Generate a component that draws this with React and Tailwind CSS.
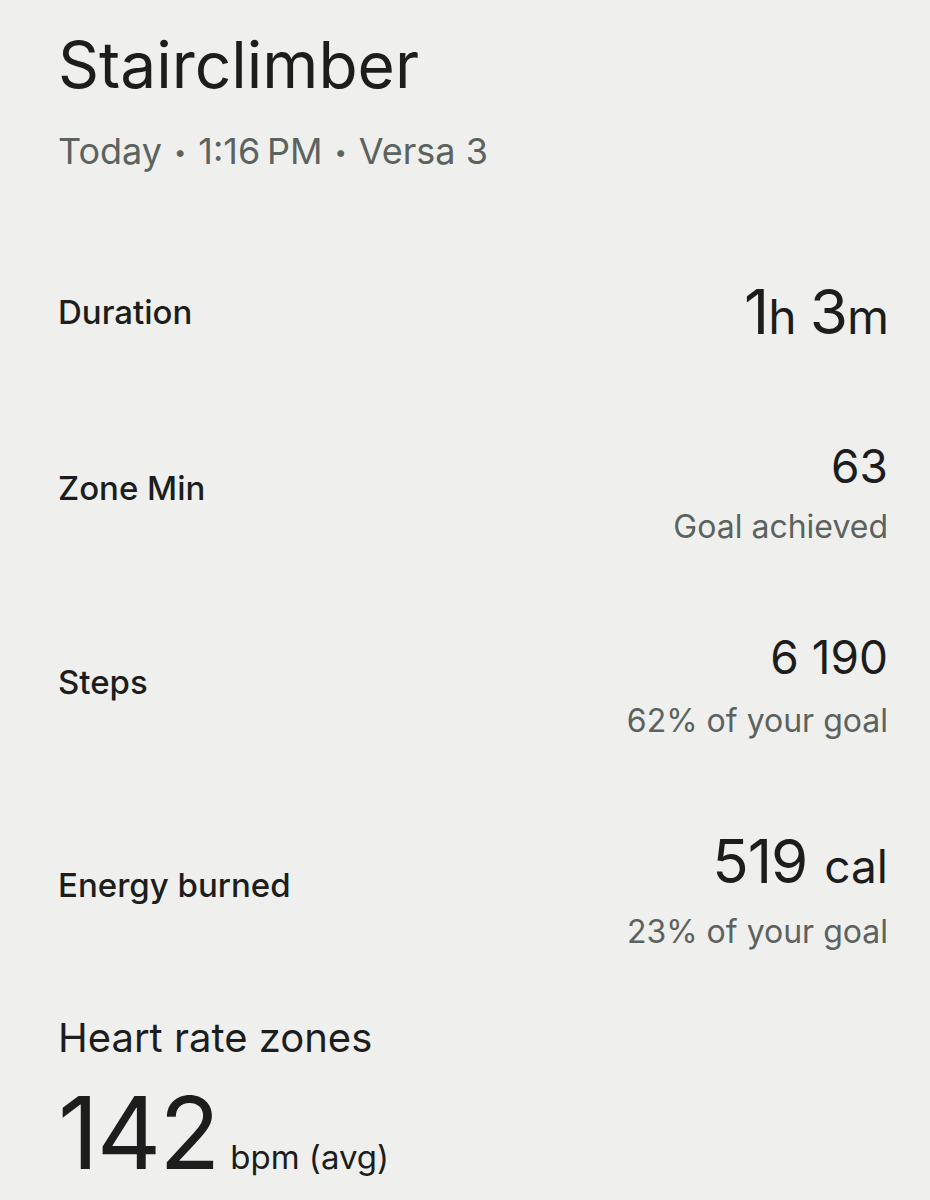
const rows = [
  { label: 'Duration', value: '1h 3m', rowTop: 101, labelTop: 15 },
  { label: 'Zone Min', value: '63', sub: 'Goal achieved', rowTop: 89, labelTop: 27, subGap: 16 },
  { label: 'Steps', value: '6 190', sub: '62% of your goal', rowTop: 85, labelTop: 30, subGap: 19 },
  { label: 'Energy burned', value: '519', unit: 'cal', sub: '23% of your goal', rowTop: 88, labelTop: 36, subGap: 14 },
];

const ink = 'text-[#1c1d1c]';

function Duration() {
  return (
    <div className={`flex items-baseline leading-[70px] tracking-[-1px] ${ink}`}>
      <span className="text-[62px]">1</span>
      <span className="text-[48px]">h</span>
      <span className="ml-[14px] text-[62px]">3</span>
      <span className="text-[48px]">m</span>
    </div>
  );
}

function Value({ row }) {
  if (row.label === 'Duration') return <Duration />;
  if (row.unit) {
    return (
      <div className={`flex items-baseline gap-[17px] leading-[64px] ${ink}`}>
        <span className="text-[60px] tracking-[-1px]">{row.value}</span>
        <span className="text-[46px]">{row.unit}</span>
      </div>
    );
  }
  return <div className={`text-[46px] leading-[50px] ${ink}`}>{row.value}</div>;
}

function StatRow({ row }) {
  return (
    <div className="flex items-start justify-between" style={{ marginTop: row.rowTop }}>
      <div
        className={`text-[33px] font-medium leading-[40px] ${ink}`}
        style={{ marginTop: row.labelTop }}
      >
        {row.label}
      </div>
      <div className="flex flex-col items-end">
        <Value row={row} />
        {row.sub && (
          <div className="text-[32px] leading-[40px] text-[#5c625e]" style={{ marginTop: row.subGap }}>
            {row.sub}
          </div>
        )}
      </div>
    </div>
  );
}

function Dot() {
  return <span className="mx-[12px] align-[4px] text-[22px]">•</span>;
}

export default function App() {
  return (
    <div
      className="flex min-h-[1200px] w-[930px] flex-col overflow-hidden bg-[#eff0ee] pl-[58px] pr-[42px] pt-[27px]"
      style={{ fontFamily: 'Inter, "Open Sans", sans-serif' }}
    >
      <h1 className={`text-[64px] leading-[76px] ${ink}`}>Stairclimber</h1>
      <p className="mt-[24px] text-[36px] leading-[48px] text-[#5c625e]">
        Today<Dot />1:16{'\u202F'}PM<Dot />Versa 3
      </p>

      {rows.map((row) => (
        <StatRow key={row.label} row={row} />
      ))}

      <h2 className={`mt-[61px] text-[40px] leading-[50px] ${ink}`}>Heart rate zones</h2>
      <div className={`mt-[15px] flex items-baseline gap-[12px] ${ink}`}>
        <span className="text-[100px] leading-[110px] tracking-[-2px]">142</span>
        <span className="text-[33px]">bpm (avg)</span>
      </div>
    </div>
  );
}
